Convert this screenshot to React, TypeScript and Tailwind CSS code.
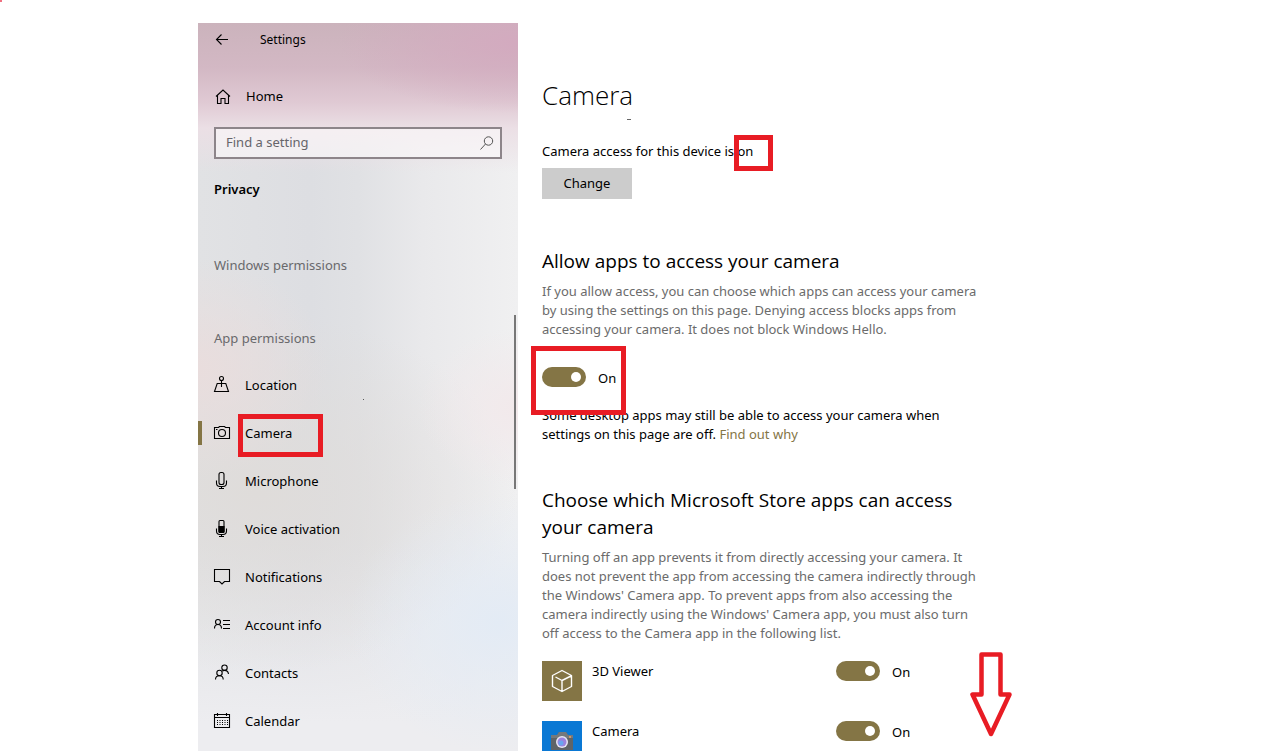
import { useState } from "react";
import type { ReactNode } from "react";

function Icon(props: { children: ReactNode }) {
  return (
    <svg
      viewBox="0 0 16 16"
      className="size-4 shrink-0 overflow-visible"
      fill="none"
      stroke="currentColor"
      strokeWidth="1.1"
      aria-hidden="true"
    >
      {props.children}
    </svg>
  );
}

const navItems = [
  {
    label: "Location",
    icon: (
      <>
        <circle cx="7.5" cy="1.5" r="2" />
        <path d="M7.5 3.5V10M4 6.500h7M5 6.500H3.200L.5 14.500h14L11.800 6.500H10" />
      </>
    ),
  },
  {
    label: "Camera",
    icon: (
      <>
        <path d="M.5 2.5h4l1-1h5l1 1h4v11H.5z" />
        <circle cx="8" cy="8" r="3.5" />
        <path d="M2 4.5h1.5" />
      </>
    ),
  },
  {
    label: "Microphone",
    icon: (
      <>
        <rect x="5" y="-.5" width="5" height="12" rx="2" />
        <path d="M2.5 7.5v2.2c0 2.2 1.5 3.8 3.5 3.8h3c2 0 3.5-1.6 3.5-3.8V7.5M7.5 13.5v2M5 15.5h5" />
      </>
    ),
  },
  {
    label: "Voice activation",
    icon: (
      <>
        <rect x="5" y="-.5" width="5" height="12" rx="1" />
        <path d="M5 5.5h5v5q0 1-1 1H6q-1 0-1-1z" fill="currentColor" />
        <path d="M2.5 7.5v2.2c0 2.2 1.5 3.8 3.5 3.8h3c2 0 3.5-1.6 3.5-3.8V7.5M7.5 13.5v2M5 15.5h5" />
      </>
    ),
  },
  {
    label: "Notifications",
    icon: <path d="M.5.5h15v12h-5L8 15l-2.500-2.500h-5z" />,
  },
  {
    label: "Account info",
    icon: (
      <>
        <circle cx="4" cy="5" r="2.5" />
        <path d="M.5 11.500c0-2.400 1.500-4 3.500-4s3.500 1.600 3.500 4M9 3.500h7M9 7.500h7M9 11.500h7" />
      </>
    ),
  },
  {
    label: "Contacts",
    icon: (
      <>
        <circle cx="10.5" cy="2.7" r="2.7" />
        <circle cx="5.5" cy="8" r="2.7" />
        <path d="M1.500 14.500c0-2.300 1.700-3.800 4-3.800s3.700 1.500 3.700 3.800M8.300 6.200c.6-.6 1.300-.8 2.200-.8 2.200 0 3.700 1.400 4 3.600" />
      </>
    ),
  },
  {
    label: "Calendar",
    icon: (
      <>
        <path d="M.5 1.5h15v13H.5zM.5 4.5h15M3.5 0v3M12.5 0v3" />
        <path d="M3 7.5h11M3 9.5h11M3 11.5h11" strokeDasharray="1 1.5" />
      </>
    ),
  },
];

function Toggle(props: { id: string; label: string }) {
  const [on, setOn] = useState(true);

  return (
    <div className="flex items-start gap-3">
      <input
        id={props.id}
        type="checkbox"
        aria-label={props.label}
        checked={on}
        onChange={() => setOn(!on)}
        className="h-5 w-11 shrink-0 appearance-none rounded-full bg-[#847545] before:mt-[5px] before:ml-[29px] before:block before:size-[10px] before:rounded-full before:bg-white"
      />
      <label htmlFor={props.id} className="pt-px leading-5">
        {on ? "On" : "Off"}
      </label>
    </div>
  );
}

function Sidebar() {
  return (
    <aside className="relative flex w-80 shrink-0 flex-col bg-[radial-gradient(ellipse_180px_70px_at_320px_20px,#d3aabf_0%,#d3aabf00_100%),radial-gradient(ellipse_150px_130px_at_300px_600px,#e3ebf5_0%,#e3ebf500_100%),radial-gradient(ellipse_100px_80px_at_320px_385px,#f2e9eb_0%,#f2e9eb00_100%),radial-gradient(ellipse_130px_110px_at_0px_345px,#e9dddd_0%,#e9dddd00_100%),radial-gradient(ellipse_260px_180px_at_60px_470px,#dfdcda_0%,#dfdcda00_100%),linear-gradient(to_bottom,#cbb3bc_0px,#d3b8c4_45px,#e0cad4_80px,#ebdfe5_105px,#e8e4e800_150px),linear-gradient(to_bottom,#ededf000_520px,#ededf0_700px),linear-gradient(to_right,#e1e2e4_0%,#dddee2_35%,#e0e1e4_50%,#e9e9eb_70%,#f0f0f1_100%)]">
      <header className="flex h-[34px] items-center gap-[30px] pl-4">
        <button type="button" aria-label="Back">
          <Icon>
            <path d="M2.500 7.500H14M7.500 2.500l-5 5 5 5" />
          </Icon>
        </button>
        <span className="text-xs">Settings</span>
      </header>

      <a href="#home" className="mt-4 flex h-12 items-center gap-4 pl-4">
        <Icon>
          <path d="M2 7.500 9 1l7 6.500M3.500 6.500v8h3.500v-5h4v5h3.500v-8" />
        </Icon>
        Home
      </a>

      <div className="mx-4 mt-[6px] flex h-8 items-center border-2 border-[#8d858a] bg-white/50 pr-[6px] pl-[10px]">
        <input
          type="text"
          aria-label="Find a setting"
          placeholder="Find a setting"
          className="min-w-0 flex-1 bg-transparent outline-none placeholder:text-[#66656a]"
        />
        <svg viewBox="0 0 14 14" className="size-[14px] text-[#555]" fill="none" stroke="currentColor" aria-hidden="true">
          <circle cx="8.5" cy="5" r="4.2" />
          <path d="M5.500 8 .5 13.500" />
        </svg>
      </div>

      <h2 className="mt-5 pl-4 leading-5 font-semibold">Privacy</h2>
      <h3 className="mt-14 pl-4 leading-5 text-[#69696c]">Windows permissions</h3>
      <h3 className="mt-[53px] pl-4 leading-5 text-[#69696c]">App permissions</h3>

      <nav className="mt-[14px]">
        {navItems.map((item) => {
          const active = item.label === "Camera";
          return (
            <a
              key={item.label}
              href={"#" + item.label}
              className="relative flex h-12 items-center"
            >
              <span className={active ? "mb-[3px] h-6 w-1 bg-[#847545]" : "h-6 w-1"} />
              <span className="mr-[15px] ml-3 flex pb-[2px]">
                <Icon>{item.icon}</Icon>
              </span>
              {item.label}
              {active && (
                <span className="absolute top-1 left-10 h-[43px] w-[85px] border-5 border-[#e81c24]" />
              )}
            </a>
          );
        })}
      </nav>

      <span className="absolute top-[376px] left-[165px] size-px bg-[#555]" />
      <span className="absolute top-[292px] right-[2px] h-[174px] w-[2px] bg-[#777]" />
    </aside>
  );
}

function ViewerTile() {
  return (
    <svg viewBox="0 0 40 40" className="size-10 shrink-0 bg-[#847545]" fill="none" stroke="white" strokeWidth="1.4" strokeLinejoin="round" aria-hidden="true">
      <path d="M20 9.500 29.500 14.500v11L20 30.500l-9.500-5v-11zM13.500 16 20 19.500l9-4.500M20 19.500v11" />
    </svg>
  );
}

function CameraTile() {
  return (
    <svg viewBox="0 0 40 40" className="size-10 shrink-0 bg-[#0a78d4]" aria-hidden="true">
      <path d="M9 14h6l2-3h7l2 3h5v15H9z" fill="#5f6468" />
      <path d="M9 14h6l2-3h7l2 3h5v3H9z" fill="#75797d" />
      <circle cx="20" cy="21" r="6" fill="#e8e8f4" />
      <circle cx="20" cy="21" r="4.5" fill="#9b83df" />
      <circle cx="19" cy="22" r="2.5" fill="#69a5f1" />
      <circle cx="28" cy="16" r="1" fill="#f0a060" />
    </svg>
  );
}

function AppRow(props: { id: string; name: string; tile: ReactNode }) {
  return (
    <li className="flex items-start">
      {props.tile}
      <span className="w-[254px] pl-[10px] leading-5">{props.name}</span>
      <Toggle id={props.id} label={props.name} />
    </li>
  );
}

export default function App() {
  return (
    <div className="relative flex h-screen overflow-hidden bg-white pt-[23px] pl-[198px] font-['Noto_Sans','Open_Sans',sans-serif] text-[13px] text-black">
      <span className="absolute top-0 left-0 size-[2px] bg-[#f07080]" />
      <Sidebar />

      <main className="relative min-w-0 flex-1 pl-6">
        <h1 className="relative mt-[52px] font-['Open_Sans',sans-serif] text-[26px] leading-10 font-light">
          Camera
          <span className="absolute top-11 left-[85px] h-px w-1 bg-[#666]" />
        </h1>

        <p className="relative mt-[26px] leading-5">
          Camera access for this device is on
          <span className="absolute -top-[6px] left-48 h-9 w-[39px] border-5 border-[#e81c24]" />
        </p>
        <button type="button" className="mt-[7px] h-[31px] w-[90px] bg-[#ccc]">
          Change
        </button>

        <h2 className="mt-[49px] font-['Open_Sans',sans-serif] text-[19px] leading-[27px]">Allow apps to access your camera</h2>
        <p className="mt-[7px] leading-[19px] text-[#6b6b6b]">
          If you allow access, you can choose which apps can access your camera
          <br />
          by using the settings on this page. Denying access blocks apps from
          <br />
          accessing your camera. It does not block Windows Hello.
        </p>

        <div className="mt-7">
          <Toggle id="allow-apps" label="Allow apps to access your camera" />
        </div>

        <p className="relative mt-[18px] leading-[19px]">
          Some desktop apps may still be able to access your camera when
          <br />
          settings on this page are off.{" "}
          <a href="#why" className="text-[#847545]">
            Find out why
          </a>
          <span className="absolute -top-[60px] -left-[11px] h-[69px] w-[95px] border-5 border-[#e81c24]" />
        </p>

        <h2 className="mt-[43px] font-['Open_Sans',sans-serif] text-[19px] leading-[27px]">
          Choose which Microsoft Store apps can access
          <br />
          your camera
        </h2>
        <p className="mt-[7px] leading-[19px] text-[#6b6b6b]">
          Turning off an app prevents it from directly accessing your camera. It
          <br />
          does not prevent the app from accessing the camera indirectly through
          <br />
          the Windows' Camera app. To prevent apps from also accessing the
          <br />
          camera indirectly using the Windows' Camera app, you must also turn
          <br />
          off access to the Camera app in the following list.
        </p>

        <div className="relative mt-[18px]">
          <ul className="grid gap-5">
            <AppRow id="viewer" name="3D Viewer" tile={<ViewerTile />} />
            <AppRow id="camera" name="Camera" tile={<CameraTile />} />
          </ul>
          <svg
            viewBox="0 0 42 85"
            className="absolute -top-[9px] left-[428px] h-[85px] w-[42px]"
            fill="none"
            stroke="#e81c24"
            strokeWidth="4.5"
            strokeLinejoin="round"
            aria-hidden="true"
          >
            <path d="M11.500 2.500h19v40H39.500L21 82 2.500 42.500H11.500z" />
          </svg>
        </div>
      </main>
    </div>
  );
}
